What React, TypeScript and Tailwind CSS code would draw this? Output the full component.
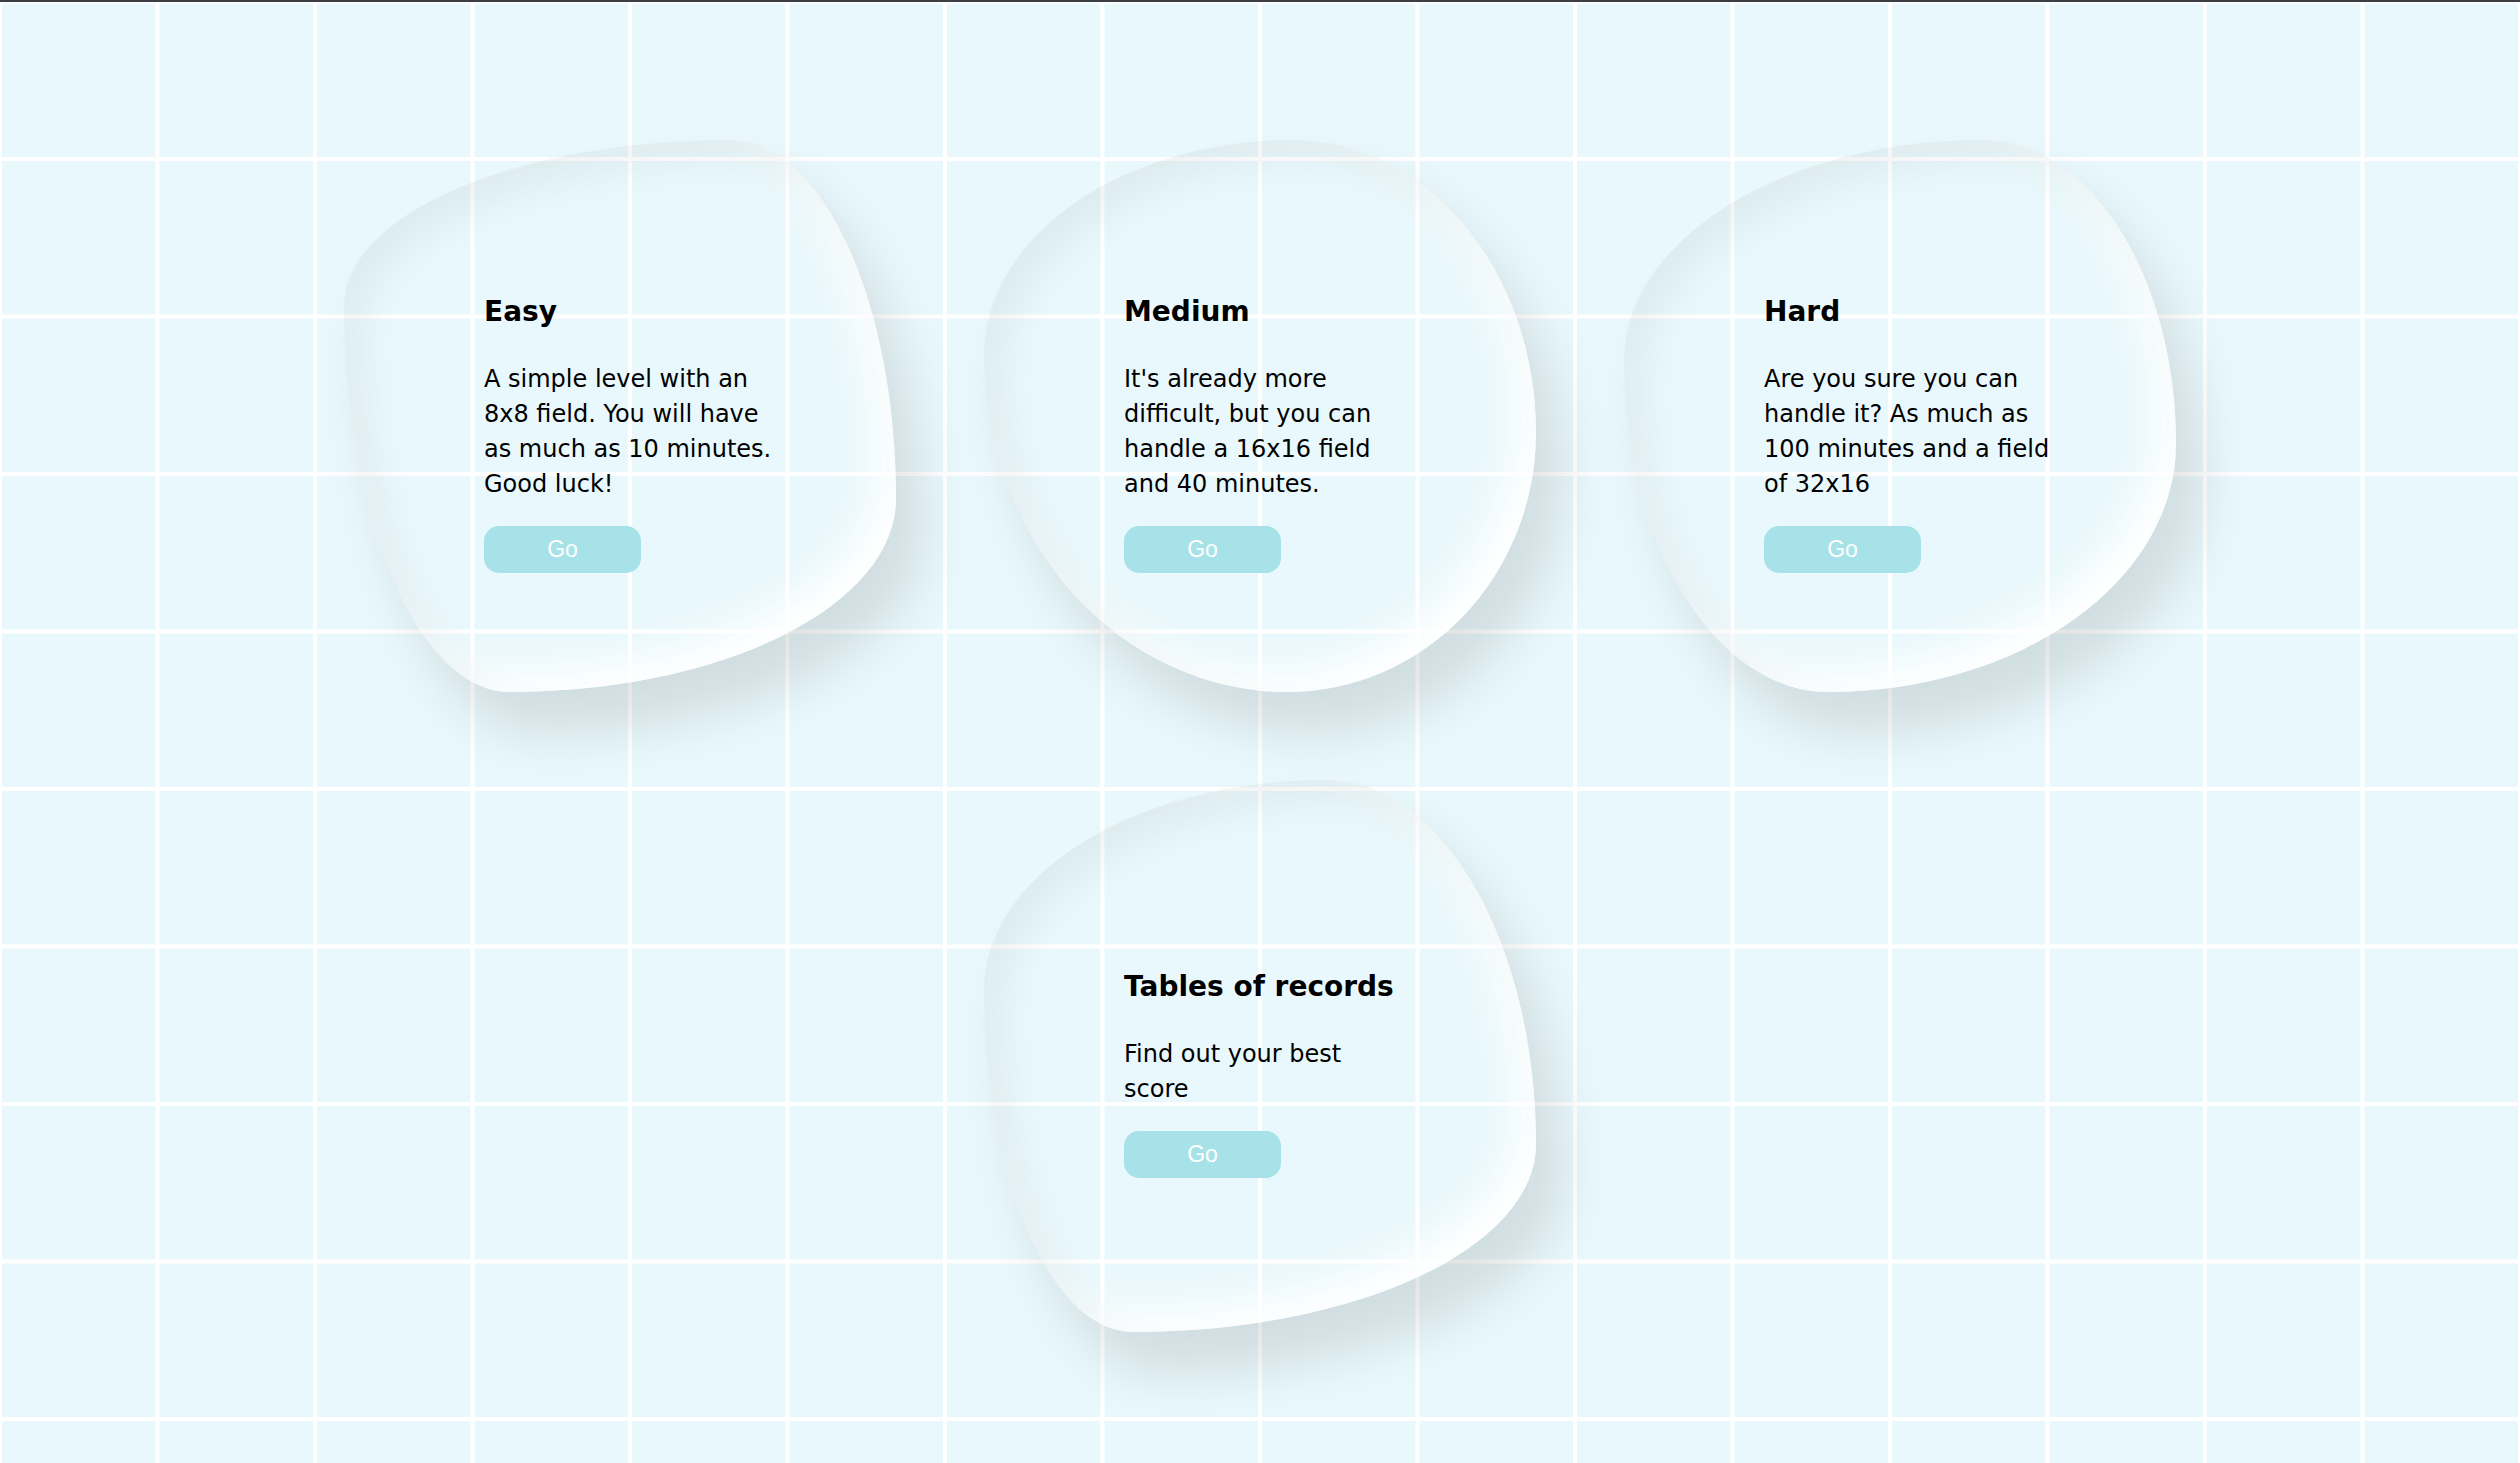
import React from 'react';

type Card = {
  title: string;
  text: string;
  shape: string;
};

const cards: Card[] = [
  {
    title: 'Easy',
    text: 'A simple level with an 8x8 field. You will have as much as 10 minutes. Good luck!',
    shape: 'rounded-[70%_30%_70%_30%/30%_65%_35%_70%]',
  },
  {
    title: 'Medium',
    text: "It's already more difficult, but you can handle a 16x16 field and 40 minutes.",
    shape: 'rounded-[56%_44%_45%_55%/39%_53%_47%_61%]',
  },
  {
    title: 'Hard',
    text: 'Are you sure you can handle it? As much as 100 minutes and a field of 32x16',
    shape: 'rounded-[65%_35%_63%_37%/40%_55%_45%_60%]',
  },
  {
    title: 'Tables of records',
    text: 'Find out your best score',
    shape: 'rounded-[62%_38%_73%_27%/38%_66%_34%_62%]',
  },
];

function BlobCard({ card }: { card: Card }) {
  return (
    <div
      className={`m-[44px] flex h-[552px] w-[552px] flex-col justify-center pt-[36px] pl-[140px] pr-[123px] shadow-[inset_20px_20px_40px_rgba(0,0,0,0.05),inset_-20px_-20px_40px_#fff,25px_40px_55px_rgba(0,0,0,0.11)] ${card.shape}`}
    >
      <h2 className="mb-[33px] text-[28px] leading-[34px] font-bold text-black">{card.title}</h2>
      <p className="mb-[24px] text-[24px] leading-[35px] text-black">{card.text}</p>
      <button
        type="button"
        className="h-[47px] w-[157px] rounded-[15px] bg-[#a6e2e8] font-['Liberation_Sans',Arial,sans-serif] text-[23px] text-white"
      >
        Go
      </button>
    </div>
  );
}

export default function App() {
  return (
    <div className="min-h-screen border-t-2 border-[#3b3e44] bg-[#e9f8fc] bg-[linear-gradient(to_right,#fff_4px,transparent_4px),linear-gradient(to_bottom,#fff_4px,transparent_4px)] bg-size-[157.5px_157.5px] bg-position-[-2px_-2.5px] font-['Comic_Sans_MS','DejaVu_Sans',sans-serif]">
      {/* level cards */}
      <div className="mx-auto flex w-[1920px] flex-wrap justify-center pt-[94px]">
        {cards.map((card) => (
          <BlobCard key={card.title} card={card} />
        ))}
      </div>
    </div>
  );
}
